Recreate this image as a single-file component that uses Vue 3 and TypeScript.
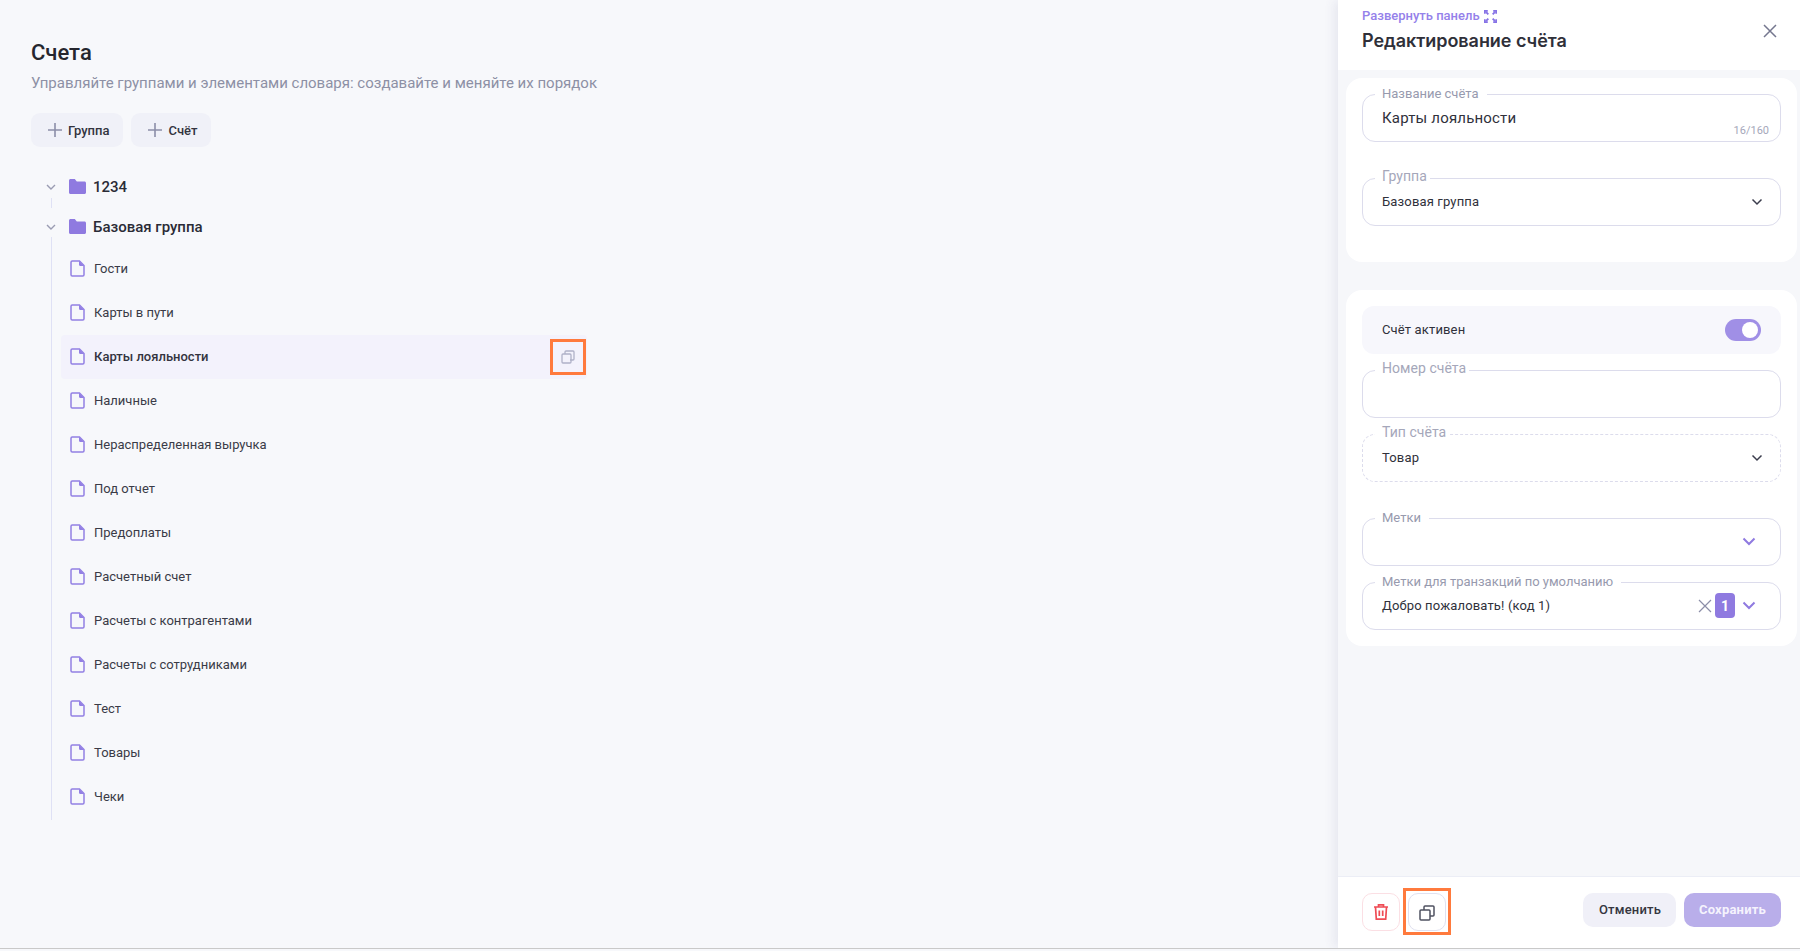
<script setup lang="ts">
const items: string[] = ['Гости','Карты в пути','Карты лояльности','Наличные','Нераспределенная выручка','Под отчет','Предоплаты','Расчетный счет','Расчеты с контрагентами','Расчеты с сотрудниками','Тест','Товары','Чеки']
const activeItem = 'Карты лояльности'
</script>

<template>
  <div class="page">
    <main class="main">
      <h1 class="title">Счета</h1>
      <p class="subtitle">Управляйте группами и элементами словаря: создавайте и меняйте их порядок</p>
      <div class="actions">
        <button class="add-btn">
          <svg width="16" height="16" viewBox="0 0 16 16"><path d="M8 1v14M1 8h14" stroke="#8c8ea8" stroke-width="1.6" fill="none"/></svg>
          Группа
        </button>
        <button class="add-btn">
          <svg width="16" height="16" viewBox="0 0 16 16"><path d="M8 1v14M1 8h14" stroke="#8c8ea8" stroke-width="1.6" fill="none"/></svg>
          Счёт
        </button>
      </div>

      <div class="tree">
        <div class="group-row">
          <svg class="chev" width="10" height="6" viewBox="0 0 10 6"><path d="M1 1l4 4 4-4" stroke="#9a9cb2" stroke-width="1.4" fill="none"/></svg>
          <svg class="folder" width="17" height="15" viewBox="0 0 17 15"><path d="M0 1.5C0 .7.7 0 1.500 0h4.300l2 2.500h7.700c.8 0 1.500.7 1.500 1.500v9.500c0 .8-.7 1.500-1.500 1.500h-14C.7 15 0 14.300 0 13.500z" fill="#8f7ae0"/></svg>
          <span>1234</span>
        </div>
        <div class="group-gap"><i class="rail short"></i></div>
        <div class="group-row">
          <svg class="chev" width="10" height="6" viewBox="0 0 10 6"><path d="M1 1l4 4 4-4" stroke="#9a9cb2" stroke-width="1.4" fill="none"/></svg>
          <svg class="folder" width="17" height="15" viewBox="0 0 17 15"><path d="M0 1.5C0 .7.7 0 1.500 0h4.300l2 2.500h7.700c.8 0 1.500.7 1.500 1.500v9.500c0 .8-.7 1.500-1.500 1.500h-14C.7 15 0 14.300 0 13.500z" fill="#8f7ae0"/></svg>
          <span>Базовая группа</span>
        </div>
        <ul class="items">
          <li v-for="item in items" :key="item" class="item" :class="{ active: item === activeItem }">
            <svg class="file" width="15" height="17" viewBox="0 0 15 17"><path d="M1 2.200C1 1.500 1.500 1 2.200 1H9.500L14 5.500v9.300c0 .7-.5 1.200-1.200 1.200H2.200C1.500 16 1 15.500 1 14.800z" fill="#f6f7fb" stroke="#9380e4" stroke-width="1.500"/><path d="M9.500 1.500v3.500c0 .3.200.5.500.5h3.500" fill="#9380e4" stroke="#9380e4" stroke-width="1"/></svg>
            <span>{{ item }}</span>
            <span v-if="item === activeItem" class="row-copy">
              <svg width="14" height="14" viewBox="0 0 14 14" fill="none" stroke="#b0b1c8" stroke-width="1.300"><rect x="1" y="4" width="9" height="9" rx="1"/><path d="M4 4V2c0-.6.400-1 1-1h7c.6 0 1 .4 1 1v7c0 .6-.4 1-1 1h-3"/></svg>
            </span>
          </li>
        </ul>
      </div>
    </main>

    <aside class="panel">
      <header class="panel-head">
        <a class="expand">Развернуть панель
          <svg width="13" height="13" viewBox="0 0 12 12" fill="none" stroke="#8672e6" stroke-width="1.700"><path d="M.7 3.500V.7h2.800M8.500.7h2.800v2.800M.7 8.500v2.800h2.800M8.500 11.300h2.800V8.500M2 2l2 2M10 2L8 4M2 10l2-2M10 10L8 8"/></svg>
        </a>
        <h2 class="panel-title">Редактирование счёта</h2>
        <svg class="close" width="14" height="14" viewBox="0 0 14 14"><path d="M1 1l12 12M13 1L1 13" stroke="#75778f" stroke-width="1.500" fill="none"/></svg>
      </header>

      <div class="panel-body">
        <section class="card first">
          <div class="field name-field">
            <label class="lbl sm wide">Название счёта</label>
            <span class="value big">Карты лояльности</span>
            <span class="counter">16/160</span>
          </div>
          <div class="field">
            <label class="lbl">Группа</label>
            <span class="value">Базовая группа</span>
            <svg class="arrow" width="12" height="8" viewBox="0 0 12 8"><path d="M1.500 1.500L6 6l4.500-4.500" stroke="#3b3d4d" stroke-width="1.500" fill="none"/></svg>
          </div>
        </section>

        <section class="card second">
          <div class="switch-row">
            <span>Счёт активен</span>
            <span class="switch"><i></i></span>
          </div>
          <div class="field">
            <label class="lbl">Номер счёта</label>
          </div>
          <div class="field dashed">
            <label class="lbl tint">Тип счёта</label>
            <span class="value">Товар</span>
            <svg class="arrow" width="12" height="8" viewBox="0 0 12 8"><path d="M1.500 1.500L6 6l4.500-4.500" stroke="#3b3d4d" stroke-width="1.500" fill="none"/></svg>
          </div>
          <div class="field tags">
            <label class="lbl sm wide">Метки</label>
            <svg class="arrow violet" width="14" height="9" viewBox="0 0 14 9"><path d="M1.500 1.500L7 7l5.500-5.500" stroke="#8f7ae0" stroke-width="2" fill="none"/></svg>
          </div>
          <div class="field">
            <label class="lbl sm wide">Метки для транзакций по умолчанию</label>
            <span class="value">Добро пожаловать! (код 1)</span>
            <svg class="clear" width="14" height="14" viewBox="0 0 14 14"><path d="M1 1l12 12M13 1L1 13" stroke="#8c8ea8" stroke-width="1.200" fill="none"/></svg>
            <span class="count">1</span>
            <svg class="arrow violet" width="14" height="9" viewBox="0 0 14 9"><path d="M1.500 1.500L7 7l5.500-5.500" stroke="#8f7ae0" stroke-width="2" fill="none"/></svg>
          </div>
        </section>
      </div>

      <footer class="panel-foot">
        <button class="icon-btn danger">
          <svg width="16" height="18" viewBox="0 0 16 18" fill="none" stroke="#ef4c55" stroke-width="1.700"><path d="M1 4h14M5.500 4V1.800h5V4M2.500 4l.8 12.200h9.400L13.500 4M6.300 7.500v5.500M9.700 7.500v5.500"/></svg>
        </button>
        <button class="icon-btn copy">
          <svg class="copy-ico" width="16" height="16" viewBox="0 0 16 16" fill="none" stroke="#4f5160" stroke-width="1.500"><rect x="1" y="5" width="10" height="10" rx="1"/><path d="M5 5V2c0-.6.400-1 1-1h8c.6 0 1 .4 1 1v8c0 .6-.4 1-1 1h-3"/></svg>
        </button>
        <span class="spacer"></span>
        <button class="btn cancel">Отменить</button>
        <button class="btn save">Сохранить</button>
      </footer>
    </aside>
  </div>
</template>

<style>
html, body { margin: 0; background: #f7f8fb; }
</style>

<style scoped>
* { box-sizing: border-box; }
button { font: inherit; border: 0; cursor: pointer; }
.page {
  display: flex;
  height: 949px;
  border-bottom: 1px solid #c9c9c9;
  background: #f7f8fb;
  font-family: Roboto, "Liberation Sans", sans-serif;
  color: #272833;
  overflow: hidden;
}
.main { flex: 1; padding: 39px 0 0 31px; min-width: 0; }
.title { margin: 0; font-size: 22px; line-height: 28px; font-weight: 500; color: #25262e; }
.subtitle { margin: 6px 0 0; font-size: 15px; line-height: 20px; color: #8d90a5; }
.actions { display: flex; gap: 8px; margin-top: 20px; }
.add-btn {
  display: flex; align-items: center; gap: 5px;
  height: 34px; padding: 0 14px 0 16px;
  background: #f0f1f8; border-radius: 9px;
  font-size: 13px; font-weight: 500; color: #33343f;
}
.tree { margin-top: 20px; padding-left: 0; }
.group-row {
  display: flex; align-items: center; height: 40px;
  font-size: 15px; font-weight: 500; color: #2a2b36;
  position: relative;
}
.chev { margin-left: 15px; }
.folder { margin-left: 13px; margin-right: 7px; margin-top: -1px; }
.group-gap { height: 0; position: relative; }
.rail { position: absolute; left: 20px; width: 1px; background: #dfe1f5; }
.rail.short { top: -9px; height: 10px; }
.items {
  list-style: none; margin: 0 0 0 20px; padding: 0 0 0 9px;
  width: 536px; border-left: 1px solid #dfe1f5;
  margin-top: -10px; padding-top: 10px; padding-bottom: 1px;
}
.item {
  display: flex; align-items: center; height: 44px;
  padding: 0 0 2px 9px; font-size: 13px; color: #3a3b47;
  border-radius: 4px; position: relative;
}
.item .file { margin-right: 9px; }
.item.active { background: #f3f2fc; font-weight: 500; color: #33343f; }
.row-copy {
  position: absolute; right: 1px; top: 4px;
  width: 36px; height: 36px;
  display: flex; align-items: center; justify-content: center;
  border: 3px solid #ff7a3d;
}
.panel {
  width: 462px; flex: none; height: 948px;
  display: flex; flex-direction: column;
  background: #f6f7fa;
  box-shadow: -4px 0 10px rgba(70, 70, 120, .09);
  font-family: Inter, Roboto, sans-serif;
  position: relative;
}
.panel-head { height: 70px; background: #fff; padding: 8px 24px 0; position: relative; }
.expand {
  display: flex; align-items: center; gap: 4px;
  font-family: Roboto, sans-serif;
  font-size: 13px; line-height: 16px; font-weight: 500; color: #9581ea;
}
.panel-title { margin: 5px 0 0; font-size: 18px; line-height: 24px; font-weight: 600; color: #2f3039; font-family: Inter, Roboto, sans-serif; letter-spacing: -.05px; }
.close { position: absolute; right: 23px; top: 24px; }
.panel-body { flex: 1; padding: 8px 3px 0 8px; display: flex; flex-direction: column; gap: 28px; }
.card { background: #fff; border-radius: 16px; padding: 16px; display: flex; flex-direction: column; }
.card.first { height: 184px; gap: 36px; }
.card.second { height: 356px; gap: 16px; }
.field {
  position: relative; height: 48px; flex: none;
  display: flex; align-items: center;
  padding: 0 17px 1px 19px;
  border: 1px solid #dcdcec; border-radius: 13px;
  background: #fff;
}
.field.dashed { border-style: dashed; }
.field.dashed + .tags { margin-top: 20px; }
.lbl {
  position: absolute; left: 12px; top: -13px;
  padding: 0 3px 0 7px; background: #fff;
  font-size: 14px; line-height: 20px; letter-spacing: .05px; color: #a5a7ba;
  font-family: Roboto, sans-serif;
}
.lbl.sm { top: -9px; font-size: 13px; line-height: 16px; color: #979aae; letter-spacing: 0; }
.lbl.wide { padding-right: 8px; }
.value { font-size: 13px; color: #30313b; font-family: Roboto, sans-serif; letter-spacing: .15px; }
.value.big { font-size: 15px; letter-spacing: .18px; }
.counter { position: absolute; right: 11px; bottom: 3px; font-size: 11px; line-height: 14px; color: #a5a7ba; font-family: Roboto, sans-serif; }
.arrow { margin-left: auto; }
.arrow.violet { margin-right: 7px; }
.clear { margin-left: auto; margin-right: 3px; }
.clear ~ .arrow { margin-left: 7px; }
.count {
  width: 20px; height: 25px; border-radius: 4px; background: #8f7ae0;
  color: #fff; font-size: 14px; font-weight: 700;
  display: flex; align-items: center; justify-content: center;
  font-family: Roboto, sans-serif;
}
.switch-row {
  height: 48px; flex: none; display: flex; align-items: center; justify-content: space-between;
  background: #f7f7fc; border-radius: 12px; padding: 0 20px 1px;
  font-size: 13px; color: #30313b; font-family: Roboto, sans-serif; letter-spacing: .15px;
}
.switch { width: 36px; height: 22px; border-radius: 11px; background: #a08fe6; position: relative; margin-top: 1px; }
.switch i { position: absolute; right: 3px; top: 3px; width: 16px; height: 16px; border-radius: 50%; background: #fff; }
.panel-foot {
  height: 72px; flex: none; background: #fff; border-top: 1px solid #eceef6;
  display: flex; align-items: flex-start; padding: 16px 19px 0 24px;
  gap: 8px;
}
.spacer { flex: 1; }
.icon-btn {
  width: 38px; height: 38px; border-radius: 10px; background: #fff;
  display: flex; align-items: center; justify-content: center;
  position: relative;
}
.icon-btn.danger { border: 1px solid #fbdfe4; }
.icon-btn.copy { border: 1px solid #e0e1f0; }
.copy-ico { margin-top: 2px; }
.icon-btn.copy::after {
  content: ""; position: absolute; left: -6px; top: -6px; right: -6px; bottom: -5px;
  border: 3px solid #ff7a3d;
}
.btn { height: 34px; border-radius: 10px; padding: 0 0 2px; font-size: 13px; font-weight: 500; font-family: Roboto, sans-serif; letter-spacing: .2px; }
.cancel { width: 93px; padding-left: 1px; background: #f0f0f8; color: #35363f; }
.save { width: 97px; background: #b9aeea; color: #f5f3fd; font-weight: 700; }
</style>
